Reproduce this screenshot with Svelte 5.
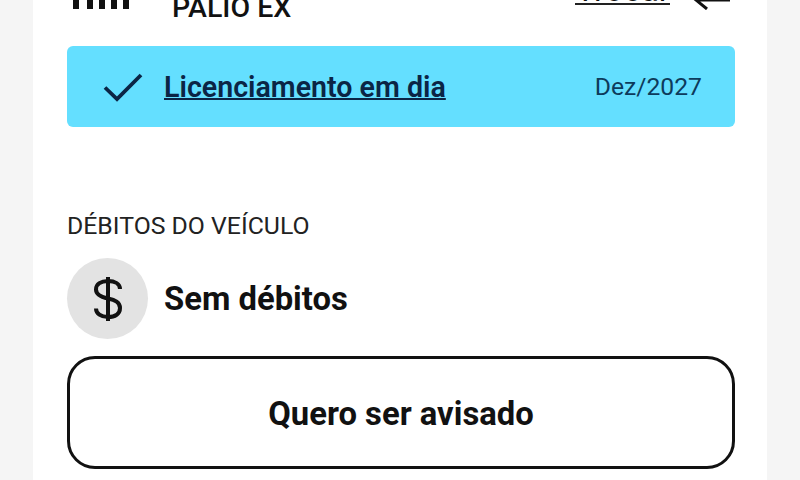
<script>
    let plate = { model: "PALIO EX", action: "Trocar" };
    let licence = { label: "Licenciamento em dia", date: "Dez/2027" };
</script>

<div class="page">
    <div class="sheet">
        <div class="vehicle">
            <svg class="car" width="62" height="34" viewBox="0 0 62 34">
                <rect x="3" y="0" width="6" height="26" fill="#111" />
                <rect x="17" y="0" width="6" height="26" fill="#111" />
                <rect x="29" y="0" width="6" height="26" fill="#111" />
                <rect x="41" y="0" width="6" height="26" fill="#111" />
                <rect x="53" y="0" width="6" height="26" fill="#111" />
            </svg>
            <div class="model">{plate.model}</div>
            <div class="swap">
                <span class="swap-text">{plate.action}</span>
                <svg class="arrow" width="40" height="30" viewBox="0 0 40 30" fill="none" stroke="#111" stroke-width="3">
                    <path d="M39 20H6M15 11 5 20l11 9" />
                </svg>
            </div>
        </div>

        <div class="status">
            <svg class="check" width="40" height="30" viewBox="0 0 40 30" fill="none" stroke="#0b2545" stroke-width="3.8">
                <path d="M2 15.500 14 27 38 3" />
            </svg>
            <span class="status-label">{licence.label}</span>
            <span class="status-date">{licence.date}</span>
        </div>

        <div class="section-title">DÉBITOS DO VEÍCULO</div>

        <div class="debts">
            <div class="coin">
                <svg width="32" height="46" viewBox="0 0 32 46" fill="none" stroke="#111" stroke-width="4">
                    <path d="M16 1v44" />
                    <path d="M28 13c0-5-5-8-12-8S4 8 4 13.500 9 21 16 22.500 28 26 28 32s-5 9-12 9-12-3.500-12-8.500" />
                </svg>
            </div>
            <span class="debts-text">Sem débitos</span>
        </div>

        <button class="notify">Quero ser avisado</button>
    </div>
</div>

<style>
    :global(body) {
        margin: 0;
        font-family: Roboto, "Liberation Sans", sans-serif;
        background: #f5f5f5;
    }

    .page {
        width: 800px;
        height: 480px;
        overflow: hidden;
        background: #f5f5f5;
    }

    .sheet {
        width: 734px;
        height: 480px;
        margin-left: 33px;
        box-sizing: border-box;
        padding: 0 32px 0 34px;
        background: #fff;
        color: #111;
    }

    /* top row runs off the screenshot */
    .vehicle {
        display: flex;
        align-items: flex-start;
        height: 46px;
    }

    .car {
        margin-top: -17px;
        margin-left: 3px;
    }

    .model {
        margin-left: 40px;
        margin-top: -8px;
        font-size: 28.500px;
        line-height: 32px;
        font-weight: 500;
    }

    .swap {
        display: flex;
        align-items: flex-start;
        margin-left: auto;
        margin-top: -20px;
        margin-right: 4px;
        gap: 21px;
    }

    .swap-text {
        margin-top: -2px;
        font-size: 33px;
        line-height: 24px;
        border-bottom: 2px solid #222;
        padding-bottom: 1px;
    }

    .status {
        display: flex;
        align-items: center;
        height: 81px;
        padding: 0 33px 0 36px;
        background: #64dfff;
        border-radius: 6px;
        color: #0b2545;
    }

    .check {
        width: 40px;
        height: 30px;
    }

    .status-label {
        margin-left: 21px;
        font-size: 28.600px;
        font-weight: 600;
        text-decoration: underline;
        text-decoration-thickness: 2px;
    }

    .status-date {
        margin-left: auto;
        font-size: 24.700px;
        color: #0d3b5c;
    }

    .section-title {
        margin-top: 85px;
        font-size: 24.800px;
        line-height: 28px;
        color: #222;
    }

    .debts {
        display: flex;
        align-items: center;
        margin-top: 18px;
        gap: 16px;
    }

    .coin {
        display: flex;
        align-items: center;
        justify-content: center;
        width: 81px;
        height: 81px;
        border-radius: 50%;
        background: #e3e3e3;
    }

    .debts-text {
        font-size: 32.800px;
        font-weight: 700;
    }

    .notify {
        display: block;
        width: 100%;
        height: 113px;
        margin-top: 17px;
        padding-top: 3px;
        box-sizing: border-box;
        border: 3.500px solid #111;
        border-radius: 28px;
        background: #fff;
        color: #111;
        font-family: inherit;
        font-size: 32.800px;
        font-weight: 700;
    }
</style>
